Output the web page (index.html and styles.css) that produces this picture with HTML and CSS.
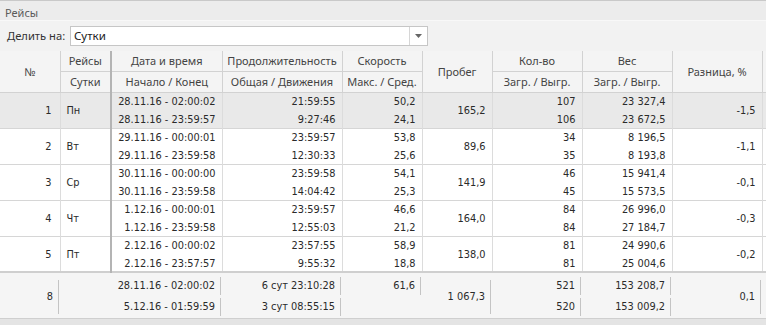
FILE: index.html
```html
<!DOCTYPE html>
<html lang="ru">
<head>
<meta charset="utf-8">
<title>Рейсы</title>
<link rel="stylesheet" href="styles.css">
</head>
<body>
<div class="panel">
  <div class="title">Рейсы</div>
  <div class="toolbar">
    <span class="label">Делить на:</span>
    <div class="combo">
      <span class="combo-text">Сутки</span>
      <span class="combo-btn"><svg width="7" height="4" viewBox="0 0 7 4"><path d="M0 0H7L3.5 4Z" fill="#666"/></svg></span>
    </div>
  </div>
  <table class="grid">
    <colgroup>
      <col class="c-num"><col class="c-day"><col class="c-date"><col class="c-dur"><col class="c-spd"><col class="c-run"><col class="c-cnt"><col class="c-wt"><col class="c-diff"><col class="c-edge">
    </colgroup>
    <thead>
      <tr>
        <th rowspan="2">№</th><th>Рейсы</th><th class="fix">Дата и время</th><th>Продолжительность</th><th>Скорость</th><th rowspan="2">Пробег</th><th>Кол-во</th><th>Вес</th><th rowspan="2">Разница, %</th><th rowspan="2" class="edge"></th>
      </tr>
      <tr>
        <th>Сутки</th><th class="fix">Начало / Конец</th><th>Общая / Движения</th><th>Макс. / Сред.</th><th>Загр. / Выгр.</th><th>Загр. / Выгр.</th>
      </tr>
    </thead>
    <tbody class="sel">
      <tr><td rowspan="2" class="num">1</td><td rowspan="2" class="day">Пн</td><td class="fix">28.11.16 - 02:00:02</td><td>21:59:55</td><td>50,2</td><td rowspan="2">165,2</td><td>107</td><td>23 327,4</td><td rowspan="2">-1,5</td><td rowspan="2" class="edge"></td></tr>
      <tr><td class="fix">28.11.16 - 23:59:57</td><td>9:27:46</td><td>24,1</td><td>106</td><td>23 672,5</td></tr>
    </tbody>
    <tbody>
      <tr><td rowspan="2" class="num">2</td><td rowspan="2" class="day">Вт</td><td class="fix">29.11.16 - 00:00:01</td><td>23:59:57</td><td>53,8</td><td rowspan="2">89,6</td><td>34</td><td>8 196,5</td><td rowspan="2">-1,1</td><td rowspan="2" class="edge"></td></tr>
      <tr><td class="fix">29.11.16 - 23:59:58</td><td>12:30:33</td><td>25,6</td><td>35</td><td>8 193,8</td></tr>
    </tbody>
    <tbody>
      <tr><td rowspan="2" class="num">3</td><td rowspan="2" class="day">Ср</td><td class="fix">30.11.16 - 00:00:00</td><td>23:59:58</td><td>54,1</td><td rowspan="2">141,9</td><td>46</td><td>15 941,4</td><td rowspan="2">-0,1</td><td rowspan="2" class="edge"></td></tr>
      <tr><td class="fix">30.11.16 - 23:59:58</td><td>14:04:42</td><td>25,3</td><td>45</td><td>15 573,5</td></tr>
    </tbody>
    <tbody>
      <tr><td rowspan="2" class="num">4</td><td rowspan="2" class="day">Чт</td><td class="fix">1.12.16 - 00:00:01</td><td>23:59:57</td><td>46,6</td><td rowspan="2">164,0</td><td>84</td><td>26 996,0</td><td rowspan="2">-0,3</td><td rowspan="2" class="edge"></td></tr>
      <tr><td class="fix">1.12.16 - 23:59:58</td><td>12:55:03</td><td>21,2</td><td>84</td><td>27 184,7</td></tr>
    </tbody>
    <tbody>
      <tr><td rowspan="2" class="num">5</td><td rowspan="2" class="day">Пт</td><td class="fix">2.12.16 - 00:00:02</td><td>23:57:55</td><td>58,9</td><td rowspan="2">138,0</td><td>81</td><td>24 990,6</td><td rowspan="2">-0,2</td><td rowspan="2" class="edge"></td></tr>
      <tr><td class="fix">2.12.16 - 23:57:57</td><td>9:55:32</td><td>18,8</td><td>81</td><td>25 004,6</td></tr>
    </tbody>
    <tfoot>
      <tr>
        <td rowspan="2"><div class="fc tall">8</div></td>
        <td rowspan="2"></td>
        <td><div class="fc">28.11.16 - 02:00:02</div></td>
        <td><div class="fc">6 сут 23:10:28</div></td>
        <td><div class="fc">61,6</div></td>
        <td rowspan="2"><div class="fc tall">1 067,3</div></td>
        <td><div class="fc">521</div></td>
        <td><div class="fc">153 208,7</div></td>
        <td rowspan="2"><div class="fc tall">0,1</div></td>
        <td rowspan="2"></td>
      </tr>
      <tr>
        <td><div class="fc">5.12.16 - 01:59:59</div></td>
        <td><div class="fc">3 сут 08:55:15</div></td>
        <td></td>
        <td><div class="fc">520</div></td>
        <td><div class="fc">153 009,2</div></td>
      </tr>
    </tfoot>
  </table>
  <div class="bottom"></div>
</div>
</body>
</html>
```
FILE: styles.css
```css
* { box-sizing: border-box; }
html, body { margin: 0; padding: 0; background: #ffffff; }
body {
  width: 766px;
  height: 325px;
  overflow: hidden;
  font-family: "Noto Sans", "DejaVu Sans", sans-serif;
  color: #333333;
}
.panel { display: flex; flex-direction: column; height: 325px; background: #e9e9e9; }
.title {
  height: 21px;
  padding: 4px 0 0 5px;
  font-size: 11px;
  color: #5a5a5a;
  background: #ececec;
  border-top: 1px solid #c9c9c9;
  border-bottom: 1px solid #f8f8f8;
}
.toolbar {
  height: 30px;
  display: flex;
  align-items: center;
  gap: 6px;
  padding: 0 0 1px 7px;
  background: #f2f2f2;
}
.label { font-size: 11.2px; color: #333; width: 57px; white-space: nowrap; }
.combo {
  width: 358px;
  height: 20px;
  display: flex;
  align-items: center;
  background: #fff;
  border: 1px solid #c6c6c6;
}
.combo-text { flex: 1; font-size: 11.5px; padding-left: 3px; color: #222; }
.combo-btn {
  width: 18px;
  height: 18px;
  display: flex;
  align-items: center;
  justify-content: center;
  border-left: 1px solid #d6d6d6;
}
.grid {
  width: 766px;
  table-layout: fixed;
  border-collapse: collapse;
  background: #fff;
}
.c-num { width: 60px; }
.c-day { width: 51px; }
.c-date { width: 111px; }
.c-dur { width: 120px; }
.c-spd { width: 80px; }
.c-run { width: 70px; }
.c-cnt { width: 90px; }
.c-wt { width: 90px; }
.c-diff { width: 90px; }
.c-edge { width: 4px; }
.grid th {
  height: 20px;
  padding: 0;
  font-weight: normal;
  font-size: 11px;
  color: #444;
  background: #f4f4f4;
  border: 1px solid #d2d2d2;
  text-align: center;
  white-space: nowrap;
  overflow: hidden;
}
.grid thead tr:first-child th { border-top: none; }
.grid thead tr:last-child th { height: 21px; }
.grid th:first-child { border-left: none; }
.grid .fix { border-left: 2px solid #b4b4b4; }
.grid td {
  height: 18px;
  padding: 1px 6px 0 4px;
  font-family: "DejaVu Sans Condensed", "DejaVu Sans", sans-serif;
  font-stretch: semi-condensed;
  font-size: 10.9px;
  color: #2a2a2a;
  text-align: right;
  white-space: nowrap;
  border-left: 1px solid #dcdcdc;
  border-right: 1px solid #dcdcdc;
}
.grid td:first-child { border-left: none; }
.grid tbody { border-bottom: 1px solid #d6d6d6; }
.grid tbody.sel td { background: #e9e9e9; }
.grid tbody td.fix { border-left: 2px solid #b4b4b4; }
.grid td.num { padding-right: 8px; }
.grid td.day { text-align: left; padding-left: 6px; }
.grid td.edge, .grid th.edge { padding: 0; }
.grid tfoot { border-top: 2px solid #cfcfcf; }
.grid tfoot td {
  height: 22px;
  padding: 0;
  background: #f5f5f5;
  border-left: none;
  border-right: none;
}
.grid tfoot tr:first-child td { height: 24px; padding-top: 3px; }
.fc {
  height: 18px;
  line-height: 18px;
  padding-right: 5px;
  border-right: 1px solid #c4c4c4;
  margin-right: 1px;
}
.fc.tall { height: 34px; line-height: 34px; }
.bottom { flex: 1; background: #e4e4e4; border-top: 1px solid #cfcfcf; }
```
